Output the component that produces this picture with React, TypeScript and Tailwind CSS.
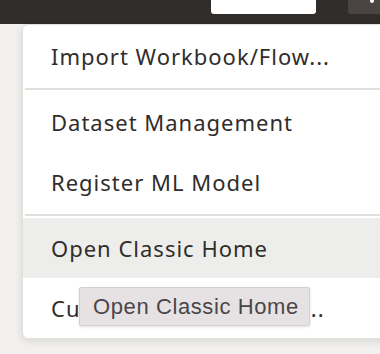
import React from 'react';

const items = [
    { label: 'Import Workbook/Flow...', divider: true },
    { label: 'Dataset Management' },
    { label: 'Register ML Model', divider: true },
    { label: 'Open Classic Home', hover: true },
    { label: 'Customize Home Page...' },
];

const App = () => {
    return (
        <div className="w-[380px] h-[354px] overflow-hidden bg-[#f2f1ef] relative" style={{ fontFamily: '"Noto Sans", sans-serif' }}>
            {/* top bar */}
            <div className="h-[24px] bg-[#312d2a] flex items-start justify-end">
                <div className="w-[105px] h-[14px] bg-white rounded-b-[3px] mr-[32px]"></div>
                <div className="w-[32px] h-[14px] bg-[#4a4542] rounded-bl-[3px] relative">
                    <div className="absolute left-[22px] -top-[1px] w-[4px] h-[4px] rounded-full bg-white"></div>
                </div>
            </div>

            {/* dropdown menu */}
            <div className="ml-[22px] w-[380px] bg-white rounded-l-[6px] border border-[#e2e0dc] pt-[1px] shadow-[0_2px_8px_rgba(0,0,0,0.12)] text-[#312d2a]">
                {items.map((item, i) => (
                    <div key={i}>
                        <div className={`h-[60px] flex items-center pl-[28px] text-[22px] tracking-[1px] whitespace-nowrap overflow-hidden ${item.hover ? 'bg-[#ededec]' : ''}`}>
                            {item.label}
                        </div>
                        {item.divider && <div className="mx-[2px] my-[2px] h-[2px] bg-[#e2e0dc]"></div>}
                    </div>
                ))}
            </div>

            {/* tooltip */}
            <div className="absolute left-[79px] top-[287px] w-[231px] h-[39px] bg-[#e6e2e3] border border-[#d6d1d1] rounded-[2px] shadow-[0_1px_3px_rgba(0,0,0,0.12)] flex items-center pl-[13px] text-[22px] tracking-[0.6px] text-[#4a4648]" style={{ fontFamily: '"Liberation Sans", Arial, sans-serif' }}>
                Open Classic Home
            </div>
        </div>
    );
};

export default App;
